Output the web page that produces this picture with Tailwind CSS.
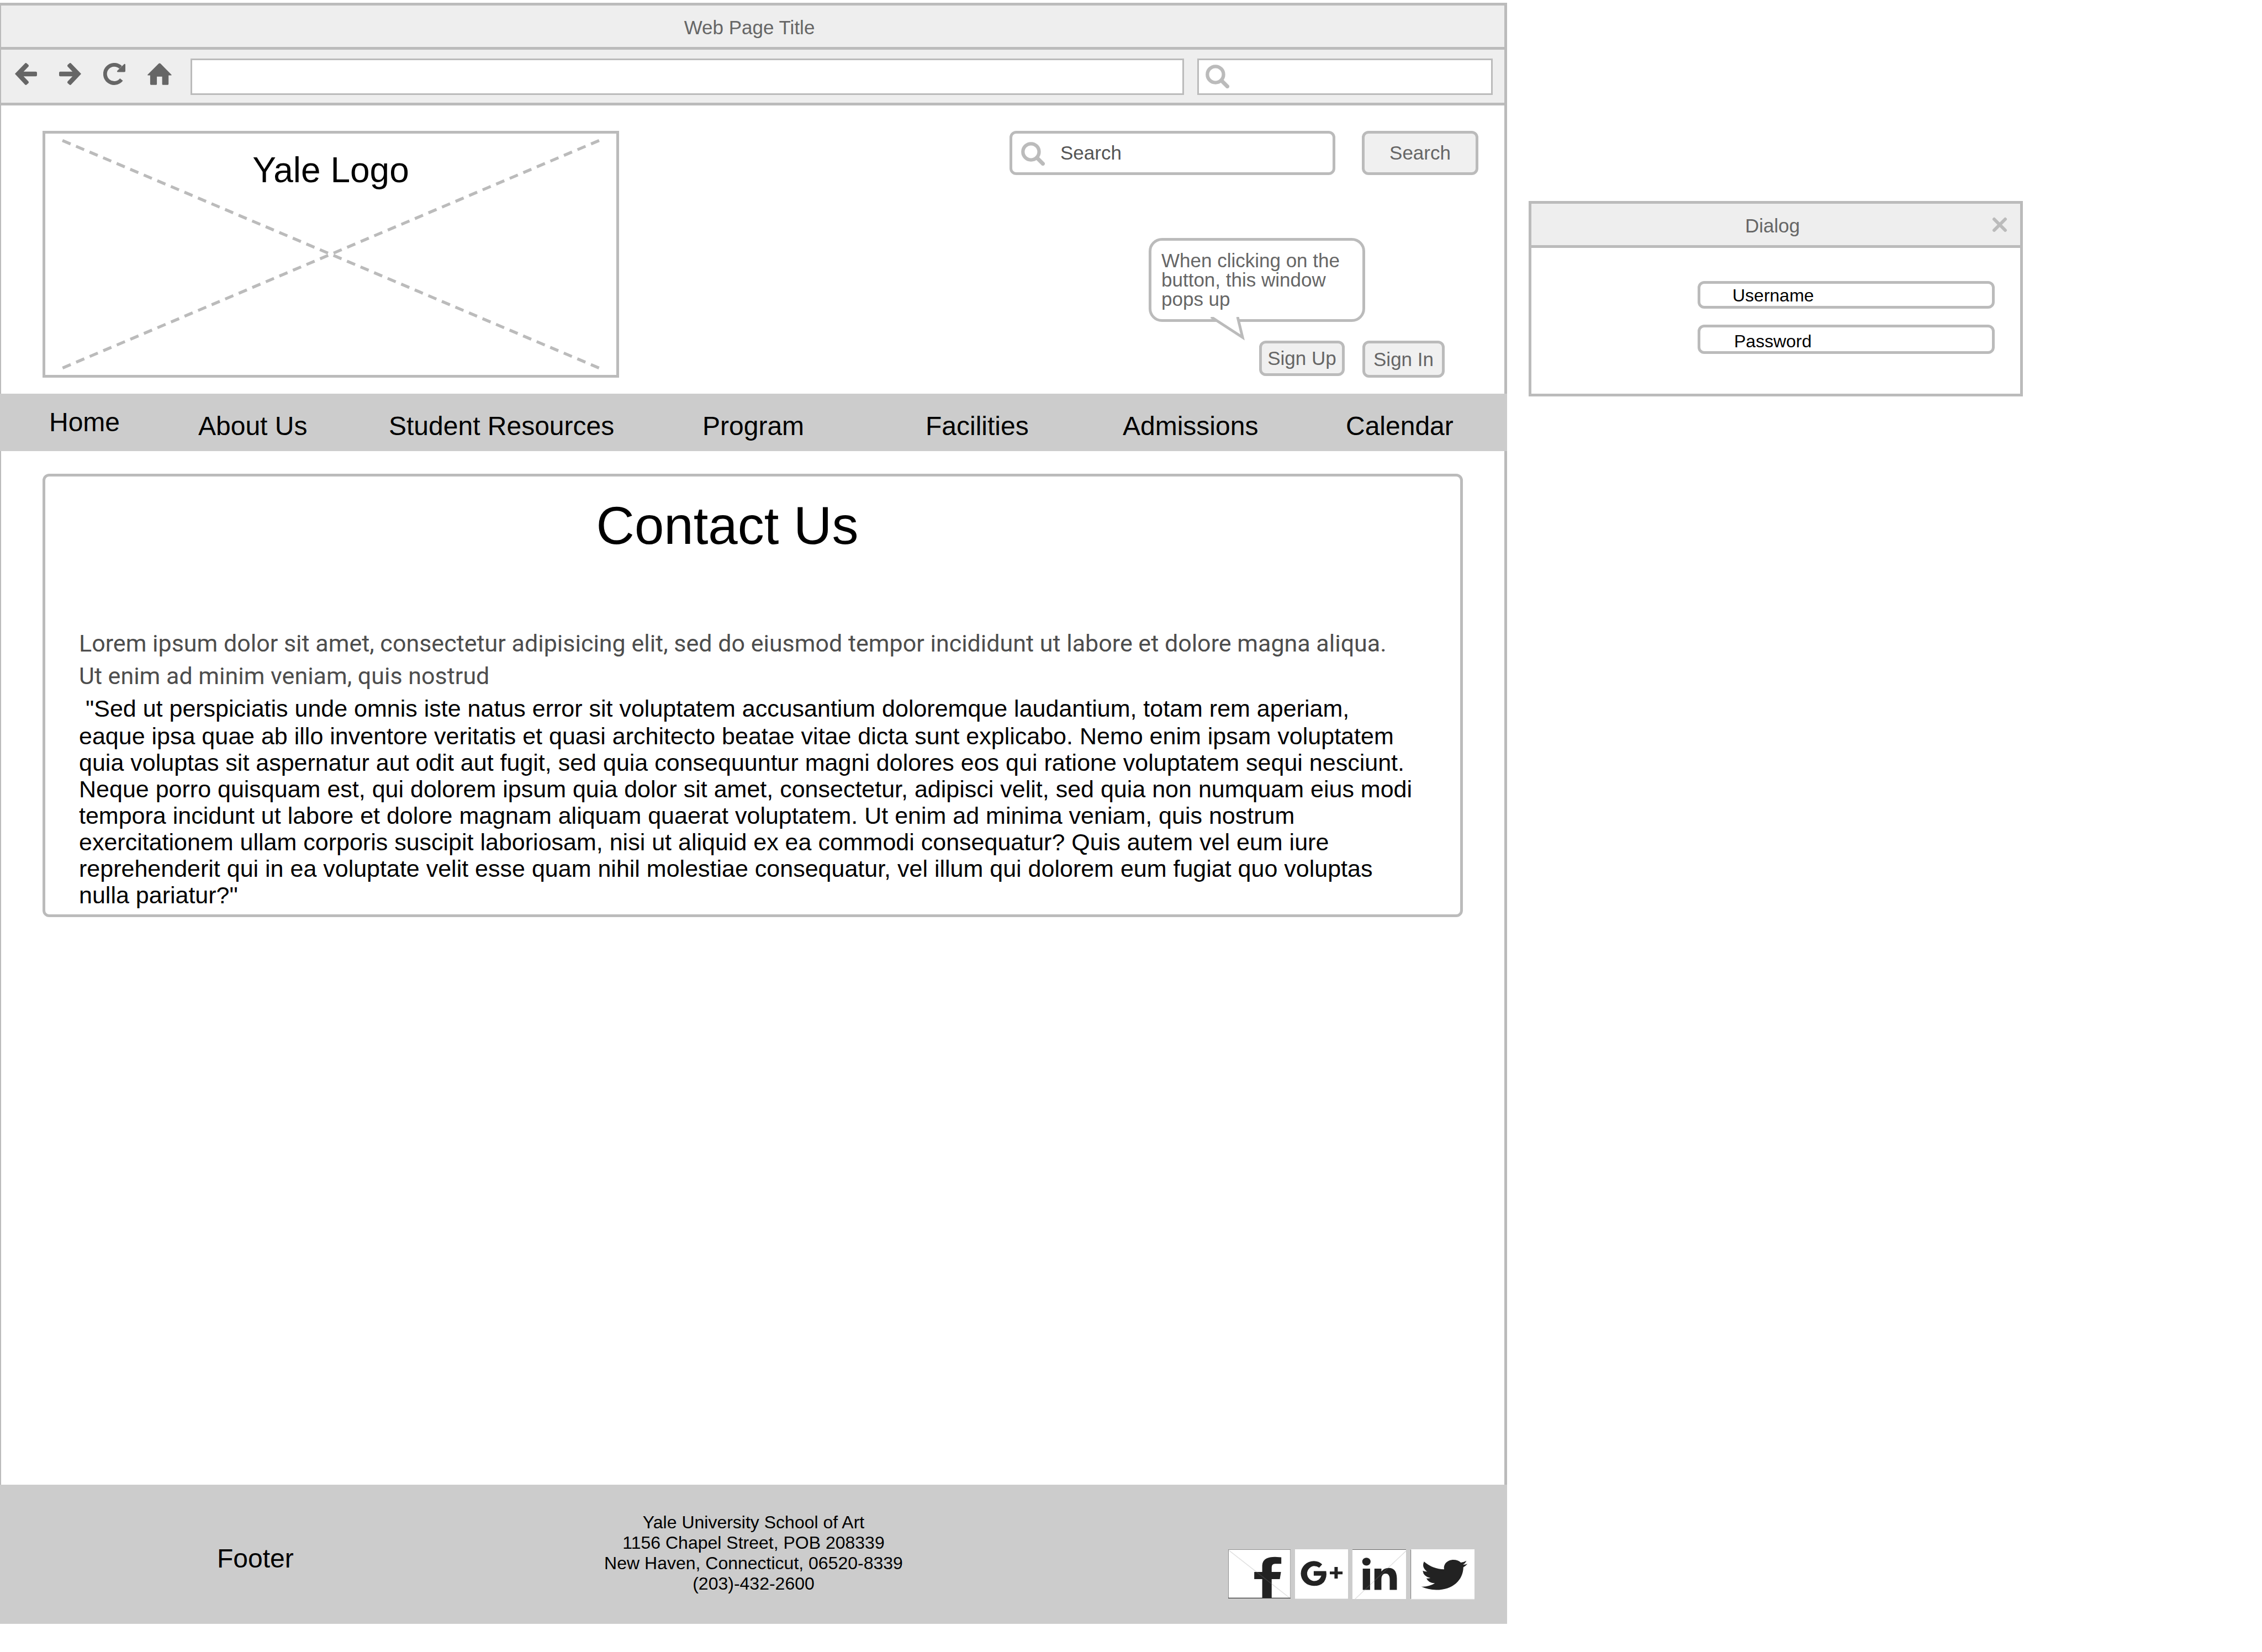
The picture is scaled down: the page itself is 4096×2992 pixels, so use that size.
<!DOCTYPE html>
<html lang="en">
<head>
<meta charset="utf-8">
<title>Web Page Title</title>
<script src="https://cdn.jsdelivr.net/npm/@tailwindcss/browser@4"></script>
</head>
<body class="bg-white text-black font-['Liberation_Sans',Arial,sans-serif]">
<div class="grid min-h-screen grid-cols-[2729fr_1367fr] items-stretch">

  <!-- Browser window -->
  <div class="flex min-w-0 flex-col pt-[5px] pb-[51px]">
    <div class="border-[#bbb] border-l-2 border-r-[5px] border-y-[5px] bg-[#eee]">
      <div class="flex h-20 items-center justify-center border-b-[5px] border-[#bbb] pt-1 pr-3 text-[35px] leading-10 text-[#666]">Web Page Title</div>
      <div class="flex h-24 items-start pt-4 pr-[21px] pl-[25px]">
        <div class="mt-2 mr-[34px] flex gap-10">
          <button type="button" aria-label="Back"><svg class="block size-10" viewBox="92 58 135 135" fill="#666"><path d="M92 125 L153 61 Q159 55 165 61 L174 69 Q179 75 174 81 L145 111 H220 Q227 111 227 118 V133 Q227 140 220 140 H145 L174 170 Q179 176 174 182 L165 190 Q159 196 153 190 Z"/></svg></button>
          <button type="button" aria-label="Forward"><svg class="block size-10" viewBox="92 58 135 135" fill="#666"><path transform="translate(319 0) scale(-1 1)" d="M92 125 L153 61 Q159 55 165 61 L174 69 Q179 75 174 81 L145 111 H220 Q227 111 227 118 V133 Q227 140 220 140 H145 L174 170 Q179 176 174 182 L165 190 Q159 196 153 190 Z"/></svg></button>
          <button type="button" aria-label="Reload"><svg class="block size-10" viewBox="636 58 135 135" fill="#666"><path d="M742 85 A56 56 0 1 0 747 160" fill="none" stroke="#666" stroke-width="23" stroke-linejoin="round"/><path d="M765 64 Q771 62 771 69 V108 Q771 114 765 114 H725 Q717 112 722 105 Z"/></svg></button>
          <button type="button" aria-label="Home"><svg class="block h-10 w-11" viewBox="904 57 152 136" fill="#666"><path d="M974 60 Q980 55 986 60 L1054 129 Q1057 134 1050 134 H1036 V188 Q1036 193 1031 193 H1000 Q996 193 996 189 V141 H963 V189 Q963 193 959 193 H926 Q921 193 921 188 V134 H910 Q903 134 905 129 Z"/></svg></button>
        </div>
        <input type="text" aria-label="Address" class="h-[66px] min-w-0 flex-1 border-3 border-[#bbb] bg-white px-4 text-[35px] outline-none">
        <div class="ml-6 flex h-[66px] w-[535px] items-start border-3 border-[#bbb] bg-white pt-2 pl-3">
          <svg class="size-[43px] shrink-0" viewBox="0 0 48 48" fill="none" stroke="#bbb" stroke-width="7"><circle cx="20" cy="20" r="16.3"/><path d="M32 32 L44 44" stroke-width="8" stroke-linecap="round"/></svg>
          <input type="text" aria-label="Search the web" class="min-w-0 flex-1 px-4 text-[35px] outline-none">
        </div>
      </div>
    </div>

    <header class="flex justify-between border-r-[5px] border-l-2 border-[#bbb] pt-[46px] pb-[29px] pl-[75px]">
      <div class="relative h-[447px] w-[1044px] border-5 border-[#bbb] pt-[30px] text-center text-[64px] leading-[72px]">
        <svg class="absolute inset-0 size-full" viewBox="6 6 1164 492" preserveAspectRatio="none" stroke="#bbb" stroke-width="6" stroke-dasharray="18 12"><path d="M41 20 L1135 484 M1135 20 L41 484"/></svg>
        <span class="relative">Yale Logo</span>
      </div>
      <div class="flex flex-col items-end pr-[47px]">
        <form class="flex gap-12 text-[35px] leading-10">
          <div class="flex h-20 w-[590px] items-start rounded-xl border-5 border-[#bbb] pt-[15px] pl-4">
            <svg class="size-[43px] shrink-0" viewBox="0 0 48 48" fill="none" stroke="#bbb" stroke-width="7"><circle cx="20" cy="20" r="16.3"/><path d="M32 32 L44 44" stroke-width="8" stroke-linecap="round"/></svg>
            <input type="search" aria-label="Search this site" placeholder="Search" class="ml-7 min-w-0 flex-1 text-[#555] outline-none placeholder:text-[#555]">
          </div>
          <button type="button" class="h-20 w-[211px] rounded-xl border-5 border-[#bbb] bg-[#f0f0f0] text-[#666]">Search</button>
        </form>
        <div class="relative mt-[114px] mr-[205px] h-[152px] w-[392px] rounded-3xl border-5 border-[#bbb] pt-[18px] pl-[18px] text-[35px] leading-[35px] text-[#666]">
          When clicking on the<br>button, this window<br>pops up
          <svg class="absolute -bottom-[42px] left-[102px] h-[46px] w-[72px]" viewBox="0 0 72 46" fill="white" stroke="#bbb" stroke-width="5"><path d="M8 -1 V1 H54" stroke="none"/><path d="M6 0 L63 37 L54 0"/></svg>
        </div>
        <div class="mt-[34px] mr-[61px] flex items-start gap-8 text-[35px] leading-10 text-[#666]">
          <button type="button" class="h-16 w-[155px] rounded-xl border-5 border-[#bbb] bg-[#f0f0f0]">Sign Up</button>
          <button type="button" class="h-[67px] w-[149px] rounded-xl border-5 border-[#bbb] bg-[#f0f0f0]">Sign In</button>
        </div>
      </div>
    </header>

    <nav class="grid h-[104px] grid-cols-[270fr_345fr_568fr_404fr_357fr_404fr_292fr] items-center bg-[#ccc] pl-[89px] text-[48px] leading-[56px] whitespace-nowrap">
      <a href="#">Home</a>
      <a href="#" class="pt-3.5">About Us</a>
      <a href="#" class="pt-3.5">Student Resources</a>
      <a href="#" class="pt-3.5">Program</a>
      <a href="#" class="pt-3.5">Facilities</a>
      <a href="#" class="pt-3.5">Admissions</a>
      <a href="#" class="pt-3.5">Calendar</a>
    </nav>

    <main class="flex-1 border-r-[5px] border-l-2 border-[#bbb] px-[75px] pt-[41px]">
      <section class="rounded-xl border-5 border-[#bbb] px-[61px] pt-[41px] pb-[11px]">
        <h1 class="pr-[92px] text-center text-[96px] leading-[96px]">Contact Us</h1>
        <p class="mt-[136px] text-[43px] leading-[59px] whitespace-nowrap text-[#4d4d4d] font-[Roboto,sans-serif]">Lorem ipsum dolor sit amet, consectetur adipisicing elit, sed do eiusmod tempor incididunt ut labore et dolore magna aliqua.<br>Ut enim ad minim veniam, quis nostrud</p>
        <p class="mt-[3px] text-[43px] leading-[48px] whitespace-nowrap"><span class="leading-[52px]">&nbsp;"Sed ut perspiciatis unde omnis iste natus error sit voluptatem accusantium doloremque laudantium, totam rem aperiam,</span><br>eaque ipsa quae ab illo inventore veritatis et quasi architecto beatae vitae dicta sunt explicabo. Nemo enim ipsam voluptatem<br>quia voluptas sit aspernatur aut odit aut fugit, sed quia consequuntur magni dolores eos qui ratione voluptatem sequi nesciunt.<br>Neque porro quisquam est, qui dolorem ipsum quia dolor sit amet, consectetur, adipisci velit, sed quia non numquam eius modi<br>tempora incidunt ut labore et dolore magnam aliquam quaerat voluptatem. Ut enim ad minima veniam, quis nostrum<br>exercitationem ullam corporis suscipit laboriosam, nisi ut aliquid ex ea commodi consequatur? Quis autem vel eum iure<br>reprehenderit qui in ea voluptate velit esse quam nihil molestiae consequatur, vel illum qui dolorem eum fugiat quo voluptas<br>nulla pariatur?"</p>
      </section>
    </main>

    <footer class="grid h-[252px] grid-cols-[1fr_auto_1fr] items-center bg-[#ccc]">
      <div class="pt-4 pl-[393px] text-[48px] leading-[56px]">Footer</div>
      <address class="pb-1 text-center text-[32px] leading-[37px] not-italic">Yale University School of Art<br>1156 Chapel Street, POB 208339<br>New Haven, Connecticut, 06520-8339<br>(203)-432-2600</address>
      <div class="flex items-start justify-end gap-2 pt-[72px] pr-[59px]">
        <a href="#" aria-label="Facebook"><svg class="block h-[89px] w-[113px] bg-white" viewBox="44 36 376 297" preserveAspectRatio="none"><path d="M249 333 V216 H201 V173 H249 V134 Q251 82 326 82 L364 84 V124 H330 Q306 122 306 146 V173 H362 L355 216 H306 V333 Z" fill="#222"/><path d="M48 42 L412 328" stroke="#888" stroke-opacity=".25" stroke-width="5"/><path d="M45 333 V37 H420" fill="none" stroke="#666" stroke-width="3"/><path d="M44 331 H420" stroke="#333" stroke-width="4"/><path d="M418 38 V329" stroke="#999" stroke-width="3"/></svg></a>
        <a href="#" aria-label="Google Plus"><svg class="block h-[90px] w-[96px] bg-white" viewBox="446 36 320 300" preserveAspectRatio="none"><path d="M610 127 L592 147 Q578 137 560 137 A48 46 0 0 0 560 228 Q594 228 605 195 H559 V168 H634 Q641 205 620 234 Q598 257 560 257 A79 75 0 1 1 560 107 Q590 107 610 127 Z M684 143 H704 V170 H733 V187 H704 V213 H684 V187 H656 V170 H684 Z" fill="#222"/><path d="M446 335 H766" stroke="#ddd" stroke-width="3"/></svg></a>
        <a href="#" aria-label="LinkedIn"><svg class="block h-[90px] w-[97px] bg-white" viewBox="799 36 322 301" preserveAspectRatio="none"><path d="M861 153 H905 V282 H861 Z M931 153 H973 V171 Q987 149 1018 149 Q1065 150 1066 212 V282 H1023 V216 Q1022 183 999 183 Q974 183 973 216 V282 H931 Z" fill="#222"/><ellipse cx="883" cy="111" rx="25" ry="24" fill="#222"/><path d="M1121 46 L815 337" stroke="#888" stroke-opacity=".25" stroke-width="5"/><path d="M799 37 H1121" stroke="#666" stroke-width="4"/></svg></a>
        <a href="#" aria-label="Twitter"><svg class="block h-[91px] w-[116px] bg-white" viewBox="1145 36 385 303" preserveAspectRatio="none"><path d="M1210 261 Q1253 264 1292 241 Q1252 239 1241 211 Q1254 213 1265 209 Q1223 201 1219 165 Q1229 171 1246 171 Q1210 144 1227 110 Q1278 155 1348 157 C1341 127 1366 99 1403 99 Q1431 99 1448 116 Q1465 114 1482 105 Q1475 120 1461 128 Q1475 128 1488 123 Q1477 136 1463 144 C1462 220 1401 281 1300 281 Q1250 280 1210 261 Z" fill="#222"/><path d="M1147 38 V336" stroke="#888" stroke-width="4"/><path d="M1145 337 H1530" stroke="#e2e2e2" stroke-width="5"/></svg></a>
      </div>
    </footer>
  </div>

  <!-- Sign-in dialog -->
  <div class="pt-[364px] pl-[39px]">
    <div role="dialog" aria-labelledby="dialog-title" class="w-[895px] border-5 border-[#bbb]">
      <div class="grid h-20 grid-cols-[1fr_auto_1fr] items-center border-b-[5px] border-[#bbb] bg-[#eee] pr-[23px] pl-[11px] text-[35px] leading-10 text-[#666]">
        <h2 id="dialog-title" class="col-start-2 pt-1">Dialog</h2>
        <button type="button" aria-label="Close" class="justify-self-end"><svg class="block size-7" viewBox="0 0 28 28" stroke="#bbb" stroke-width="6" stroke-linecap="round"><path d="M4 4 L24 24 M24 4 L4 24"/></svg></button>
      </div>
      <form class="flex flex-col items-end gap-[29px] pt-[60px] pr-[46px] pb-[72px] text-[32px] leading-9">
        <input type="text" aria-label="Username" placeholder="Username" class="h-[50px] w-[538px] rounded-xl border-5 border-[#bbb] pt-0.5 pl-[58px] outline-none placeholder:text-black">
        <input type="password" aria-label="Password" placeholder="Password" class="h-[53px] w-[538px] rounded-xl border-5 border-[#bbb] pt-2 pl-[61px] outline-none placeholder:text-black">
      </form>
    </div>
  </div>
</div>
</body>
</html>
